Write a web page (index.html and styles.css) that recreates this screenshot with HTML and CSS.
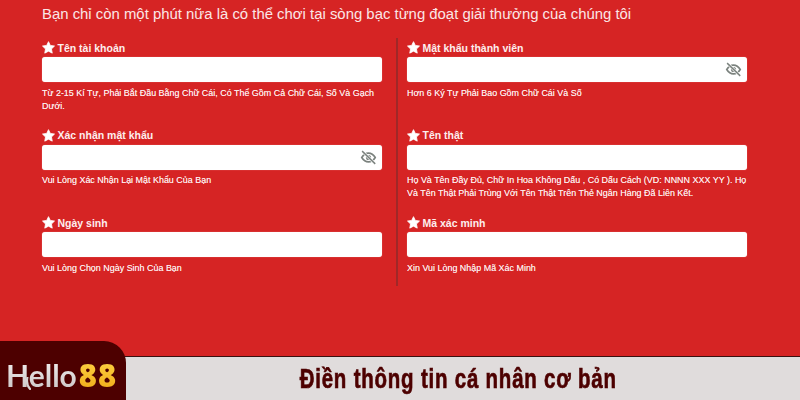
FILE: index.html
```html
<!DOCTYPE html>
<html lang="vi">
<head>
<meta charset="utf-8">
<title>Hello88</title>
<link rel="stylesheet" href="styles.css">
</head>
<body>
<svg class="defs" width="0" height="0" aria-hidden="true">
  <symbol id="star" viewBox="0 0 24 24"><path d="M12 1.2l3.4 7 7.7 1.1-5.6 5.4 1.4 7.7L12 18.8l-6.9 3.6 1.4-7.7L.9 9.3l7.7-1.1z" fill="#fff" stroke="#fff" stroke-width="1.5" stroke-linejoin="round"/></symbol>
  <symbol id="eye" viewBox="0 0 24 24"><path d="M2.5 12C5 7.8 8.2 5.8 12 5.8s7 2 9.5 6.2c-2.5 4.2-5.7 6.2-9.5 6.2S5 16.2 2.5 12z" fill="none" stroke="#7b827e" stroke-width="2.4"/><circle cx="12" cy="12" r="3.6" fill="#7b827e"/><path d="M3.5 3.5l17.5 17" stroke="#fff" stroke-width="4"/><path d="M3 3l18.5 18" stroke="#7b827e" stroke-width="2"/></symbol>
</svg>
<main class="panel">
  <h1 class="intro">Bạn chỉ còn một phút nữa là có thể chơi tại sòng bạc từng đoạt giải thưởng của chúng tôi</h1>
  <div class="form">
    <div class="col">
      <div class="field">
        <label class="label"><svg class="star"><use href="#star"/></svg>Tên tài khoản</label>
        <div class="input"></div>
        <p class="help">Từ 2-15 Kí Tự, Phải Bắt Đầu Bằng Chữ Cái, Có Thể Gồm Cả Chữ Cái, Số Và Gạch Dưới.</p>
      </div>
      <div class="field">
        <label class="label"><svg class="star"><use href="#star"/></svg>Xác nhận mật khẩu</label>
        <div class="input"><svg class="eye"><use href="#eye"/></svg></div>
        <p class="help">Vui Lòng Xác Nhận Lại Mật Khẩu Của Bạn</p>
      </div>
      <div class="field">
        <label class="label"><svg class="star"><use href="#star"/></svg>Ngày sinh</label>
        <div class="input"></div>
        <p class="help">Vui Lòng Chọn Ngày Sinh Của Bạn</p>
      </div>
    </div>
    <div class="col col-right">
      <div class="field">
        <label class="label"><svg class="star"><use href="#star"/></svg>Mật khẩu thành viên</label>
        <div class="input"><svg class="eye"><use href="#eye"/></svg></div>
        <p class="help">Hơn 6 Ký Tự Phải Bao Gồm Chữ Cái Và Số</p>
      </div>
      <div class="field">
        <label class="label"><svg class="star"><use href="#star"/></svg>Tên thật</label>
        <div class="input"></div>
        <p class="help">Họ Và Tên Đầy Đủ, Chữ In Hoa Không Dấu , Có Dấu Cách (VD: NNNN XXX YY ). Họ Và Tên Thật Phải Trùng Với Tên Thật Trên Thẻ Ngân Hàng Đã Liên Kết.</p>
      </div>
      <div class="field">
        <label class="label"><svg class="star"><use href="#star"/></svg>Mã xác minh</label>
        <div class="input"></div>
        <p class="help">Xin Vui Lòng Nhập Mã Xác Minh</p>
      </div>
    </div>
  </div>
</main>
<footer class="footer">
  <div class="logo">
    <span class="logo-hello">Hello</span><span class="logo-num">88</span>
    <svg class="logo-tail" viewBox="0 0 10 14"><path d="M6 0c-1 5-1 9 3 13" fill="none" stroke="#d8d4d4" stroke-width="2.4" stroke-linecap="round"/></svg>
  </div>
  <div class="caption">Điền thông tin cá nhân cơ bản</div>
</footer>
</body>
</html>
```
FILE: styles.css
```css
* { box-sizing: border-box; }
html, body { margin: 0; height: 400px; overflow: hidden; }
body {
  width: 800px;
  position: relative;
  background: #d62424;
  font-family: "Liberation Sans", Arial, sans-serif;
  color: #fff;
}
.defs { position: absolute; }
.panel { height: 356px; padding: 5px 0 0 42px; }
.intro {
  margin: 0;
  font-size: 14.9px;
  line-height: 18px;
  font-weight: 400;
  color: #fbe6e6;
  white-space: nowrap;
}
.form { display: flex; margin-top: 15px; height: 248px; }
.col { width: 340px; flex: none; }
.col-right {
  width: 351px;
  margin-left: 14px;
  padding-left: 9px;
  border-left: 2px solid #a02828;
}
.field { height: 87.5px; }
.label {
  display: flex;
  align-items: center;
  height: 19px;
  font-size: 10.5px;
  font-weight: 700;
  gap: 2.5px;
  color: #fdeeee;
}
.star { width: 13px; height: 13px; flex: none; }
.input {
  display: flex;
  align-items: center;
  justify-content: flex-end;
  height: 25px;
  padding-right: 5px;
  background: #fff;
  border-radius: 3px;
  box-shadow: 0 0 1px rgba(255, 220, 220, .7);
}
.eye { width: 17px; height: 17px; }
.help {
  margin: 4.5px 0 0;
  font-size: 8.95px;
  line-height: 13px;
  color: #fdeeee;
  text-shadow: 0 0 .4px rgba(255, 255, 255, .7);
}
.footer {
  position: absolute;
  left: 0;
  right: 0;
  bottom: 0;
  height: 44px;
  display: flex;
  align-items: center;
  justify-content: center;
  padding-left: 117px;
  background: #e0dcdc;
  border-top: 1px solid #3a1010;
}
.logo {
  position: absolute;
  left: 0;
  bottom: 0;
  width: 126px;
  height: 59px;
  display: flex;
  align-items: center;
  padding: 8px 0 0 6px;
  background: #4d0000;
  border-top-right-radius: 22px;
}
.logo-hello {
  font-family: Lato, sans-serif;
  font-size: 30px;
  font-weight: 700;
  background: linear-gradient(#f4f0f0, #c9c3c3);
  -webkit-background-clip: text;
  background-clip: text;
  color: transparent;
}
.logo-num {
  margin-left: 2px;
  font-family: "Open Sans", sans-serif;
  font-size: 31px;
  font-weight: 800;
  letter-spacing: 1px;
  background: linear-gradient(#ffd84a, #eea512);
  -webkit-background-clip: text;
  background-clip: text;
  color: transparent;
}
.logo-tail {
  position: absolute;
  left: 22px;
  top: 36px;
  width: 9px;
  height: 13px;
}
.caption {
  font-size: 28px;
  font-weight: 700;
  letter-spacing: 1.1px;
  color: #4d0000;
  white-space: nowrap;
  -webkit-text-stroke: .7px #4d0000;
  transform: scaleX(.73);
}
```
